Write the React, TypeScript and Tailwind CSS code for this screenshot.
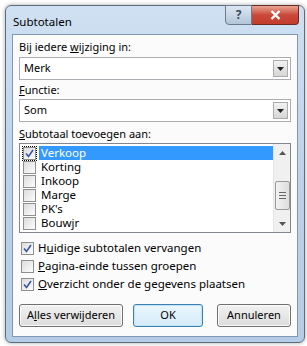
import { useState } from "react"

const font = { fontFamily: '"Noto Sans", "DejaVu Sans", sans-serif' }

function Check({ checked }: { checked: boolean }) {
  return (
    <span className="flex items-center justify-center w-[13px] h-[13px] border border-[#8f8f8f] bg-gradient-to-br from-[#dcdcdc] to-[#fdfdfd] shrink-0">
      {checked && (
        <svg width="9" height="9" viewBox="0 0 9 9">
          <path d="M1 4.5 L3.5 7.5 L8 1" fill="none" stroke="#3a54a8" strokeWidth="1.6" />
        </svg>
      )}
    </span>
  )
}

function Dropdown({ value }: { value: string }) {
  return (
    <div className="flex items-center h-[23px] border border-[#abadb3] bg-white pl-[4px] pr-[2px]">
      <span className="flex-1 text-black">{value}</span>
      <span className="flex items-center justify-center w-[15px] h-[17px] border border-[#acacac] bg-gradient-to-b from-[#f2f2f2] to-[#d6d6d6]">
        <svg width="7" height="4" viewBox="0 0 7 4">
          <path d="M0 0 H7 L3.5 4 Z" fill="#222" />
        </svg>
      </span>
    </div>
  )
}

function Btn({ children, primary, w }: { children: React.ReactNode; primary?: boolean; w: string }) {
  return (
    <button
      className={
        (primary
          ? "h-[23px] rounded-[3px] border border-[#3c7fb1] bg-gradient-to-b from-[#eaf6fd] to-[#d5ebf8] shadow-[inset_0_0_0_1px_#bfe4f8]"
          : "h-[23px] rounded-[3px] border border-[#707070] bg-gradient-to-b from-[#f2f2f2] to-[#dcdcdc] shadow-[inset_0_0_0_1px_#fbfbfb]") +
        " whitespace-nowrap text-[11px] text-black " +
        w
      }
    >
      {children}
    </button>
  )
}

export default function App() {
  const [items] = useState([
    { name: "Verkoop", on: true },
    { name: "Korting", on: false },
    { name: "Inkoop", on: false },
    { name: "Marge", on: false },
    { name: "PK's", on: false },
    { name: "Bouwjr", on: false },
  ])

  return (
    <div className="w-[307px] h-[346px] bg-white pt-[5px] pl-[5px] text-[11px] whitespace-nowrap" style={font}>
      <div className="w-[300px] h-[338px] rounded-[6px] border border-[#5d6d80] bg-gradient-to-b from-[#cfe0f2] via-[#bcd2ea] to-[#b4cce6] flex flex-col shadow-[0_0_4px_rgba(0,0,0,0.35)]">
        <div className="flex h-[28px] items-start">
          <span className="pl-[7px] pt-[7px] text-[11.5px] text-black">Subtotalen</span>
          <div className="ml-auto flex mr-[5px] -mt-px">
            <span className="flex items-center justify-center w-[27px] h-[20px] rounded-bl-[4px] border border-[#6b7b8e] bg-gradient-to-b from-[#dde7f2] to-[#b3c5d9] text-[12px] font-bold text-[#3a4a5c]">
              ?
            </span>
            <span className="flex items-center justify-center w-[47px] h-[20px] rounded-br-[4px] border border-l-0 border-[#6b2a22] bg-gradient-to-b from-[#e6a393] via-[#c9483a] to-[#c43d2d]">
              <svg width="11" height="10" viewBox="0 0 11 10">
                <path d="M1.5 1 L9.5 9 M9.5 1 L1.5 9" stroke="#fff" strokeWidth="2.4" />
              </svg>
            </span>
          </div>
        </div>

        <div className="mx-[6px] mb-[5px] flex-1 border border-[#8497b0] bg-[#fbfbfb] px-[6px] pt-[4px] text-black">
          <div className="h-[16px] leading-[16px]">
            Bij iedere <span className="underline">w</span>ijziging in:
          </div>
          <div className="mt-[2px]">
            <Dropdown value="Merk" />
          </div>
          <div className="mt-[2px] h-[16px] leading-[16px]">
            <span className="underline">F</span>unctie:
          </div>
          <div className="mt-px">
            <Dropdown value="Som" />
          </div>
          <div className="mt-[4px] h-[16px] leading-[16px]">
            <span className="underline">S</span>ubtotaal toevoegen aan:
          </div>

          <div className="mt-px flex h-[90px] border border-[#828790] bg-white">
            <div className="flex-1 pt-[2px] pl-[2px]">
              {items.map((it, i) => (
                <div key={it.name} className="flex items-center h-[14px]">
                  <span className={i === 0 ? "p-px outline outline-1 outline-dotted outline-black -outline-offset-1" : "p-px"}>
                    <Check checked={it.on} />
                  </span>
                  <span
                    className={
                      i === 0
                        ? "ml-[2px] flex-1 h-[14px] leading-[14px] bg-[#3399ff] text-white pl-[2px] text-[11.5px]"
                        : "ml-[2px] flex-1 h-[14px] leading-[14px] pl-[2px] text-[11.5px]"
                    }
                  >
                    {it.name}
                  </span>
                </div>
              ))}
            </div>
            <div className="w-[17px] bg-[#f0f0f0] border-l border-[#e6e6e6] flex flex-col items-center">
              <div className="h-[17px] flex items-center justify-center">
                <svg width="7" height="4" viewBox="0 0 7 4">
                  <path d="M0 4 H7 L3.5 0 Z" fill="#555" />
                </svg>
              </div>
              <div className="mt-[20px] w-[15px] h-[29px] rounded-[2px] border border-[#9a9a9a] bg-gradient-to-r from-[#f2f2f2] to-[#dedede] flex flex-col items-center justify-center gap-[2px]">
                <span className="w-[7px] h-px bg-[#666]" />
                <span className="w-[7px] h-px bg-[#666]" />
                <span className="w-[7px] h-px bg-[#666]" />
              </div>
              <div className="mt-auto h-[17px] flex items-center justify-center">
                <svg width="7" height="4" viewBox="0 0 7 4">
                  <path d="M0 0 H7 L3.5 4 Z" fill="#555" />
                </svg>
              </div>
            </div>
          </div>

          <div className="mt-[7px] flex flex-col gap-[2px] pl-[2px] text-[11.5px]">
            <div className="flex items-center gap-[4px] h-[16px]">
              <Check checked />
              <span>
                H<span className="underline">u</span>idige subtotalen vervangen
              </span>
            </div>
            <div className="flex items-center gap-[4px] h-[16px]">
              <Check checked={false} />
              <span>
                <span className="underline">P</span>agina-einde tussen groepen
              </span>
            </div>
            <div className="flex items-center gap-[4px] h-[16px]">
              <Check checked />
              <span>
                <span className="underline">O</span>verzicht onder de gegevens plaatsen
              </span>
            </div>
          </div>

          <div className="mt-[12px] flex items-center">
            <Btn w="w-[104px]">
              A<span className="underline">l</span>les verwijderen
            </Btn>
            <div className="ml-[10px]">
              <Btn primary w="w-[70px]">OK</Btn>
            </div>
            <div className="ml-auto">
              <Btn w="w-[74px]">Annuleren</Btn>
            </div>
          </div>
        </div>
      </div>
    </div>
  )
}
